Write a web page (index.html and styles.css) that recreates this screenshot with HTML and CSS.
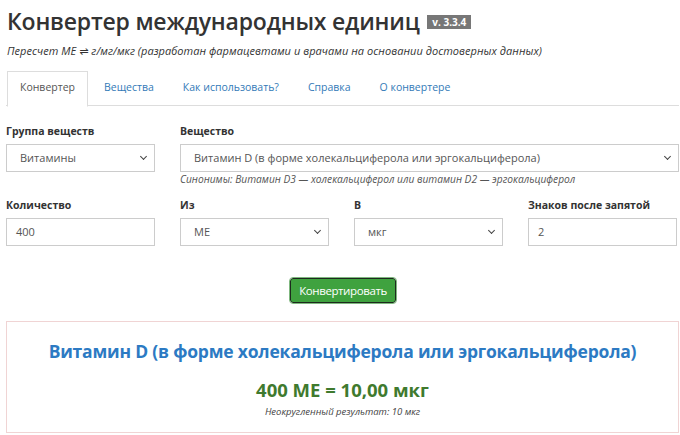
FILE: index.html
```html
<!DOCTYPE html>
<html lang="ru">
<head>
    <meta charset="UTF-8">
    <meta name="viewport" content="width=device-width, initial-scale=1.0">
    <title>Конвертер международных единиц</title>
    <link rel="stylesheet" href="styles.css">
</head>
<body>
    <div class="container">
        <h1 class="title">Конвертер международных единиц <span class="badge">v. 3.3.4</span></h1>
        <p class="lead">Пересчет МЕ &#8652; г/мг/мкг (разработан фармацевтами и врачами на основании достоверных данных)</p>

        <ul class="tabs">
            <li class="active"><a href="#">Конвертер</a></li>
            <li><a href="#">Вещества</a></li>
            <li><a href="#">Как использовать?</a></li>
            <li><a href="#">Справка</a></li>
            <li><a href="#">О конвертере</a></li>
        </ul>

        <form class="converter">
            <div class="row">
                <div class="field col-3">
                    <label>Группа веществ</label>
                    <div class="select">Витамины</div>
                </div>
                <div class="field col-9">
                    <label>Вещество</label>
                    <div class="select">Витамин D (в форме холекальциферола или эргокальциферола)</div>
                    <p class="hint">Синонимы: Витамин D3 — холекальциферол или витамин D2 — эргокальциферол</p>
                </div>
            </div>
            <div class="row">
                <div class="field col-3">
                    <label>Количество</label>
                    <div class="input">400</div>
                </div>
                <div class="field col-3">
                    <label>Из</label>
                    <div class="select">МЕ</div>
                </div>
                <div class="field col-3">
                    <label>В</label>
                    <div class="select">мкг</div>
                </div>
                <div class="field col-3">
                    <label>Знаков после запятой</label>
                    <div class="input">2</div>
                </div>
            </div>
            <div class="actions">
                <button type="button" class="btn">Конвертировать</button>
            </div>
        </form>

        <div class="result">
            <h2>Витамин D (в форме холекальциферола или эргокальциферола)</h2>
            <p class="value">400 МЕ = 10,00 мкг</p>
            <p class="raw">Неокругленный результат: 10 мкг</p>
        </div>
    </div>
</body>
</html>
```

FILE: styles.css
```css
* {
    margin: 0;
    padding: 0;
    box-sizing: border-box;
}
body {
    font-family: "Open Sans", "DejaVu Sans", sans-serif;
    color: #333;
    background: #fff;
}
.container {
    width: 673px;
    margin-left: 6px;
}
.title {
    font-size: 23px;
    font-weight: 600;
    line-height: 30px;
    padding-top: 6px;
    margin-left: 1px;
    letter-spacing: -0.2px;
}
.badge {
    display: inline-block;
    vertical-align: 4px;
    background: #777;
    color: #fff;
    font-size: 10px;
    font-weight: 700;
    line-height: 14px;
    padding: 0 5px;
    margin-left: 2px;
    letter-spacing: 0;
}
.lead {
    font-size: 11px;
    font-style: italic;
    margin-top: 7px;
    margin-left: 1px;
    color: #333;
    letter-spacing: 0.05px;
}
.tabs {
    list-style: none;
    display: flex;
    margin-top: 13px;
    border-bottom: 1px solid #ddd;
    height: 35px;
}
.tabs li a {
    display: block;
    height: 35px;
    padding: 8px 12px 0;
    font-size: 10.5px;
    color: #337ab7;
    text-decoration: none;
    border: 1px solid transparent;
    margin-right: 3px;
}
.tabs li:first-child a {
    margin-left: 1px;
}
.tabs li.active a {
    color: #555;
    border-color: #ddd;
    border-bottom-color: #fff;
    background: #fff;
    height: 36px;
}
.converter {
    margin-top: 18px;
}
.row {
    display: flex;
    gap: 25px;
    margin-bottom: 12px;
}
.col-3 {
    width: 149px;
}
.col-9 {
    flex: 1;
}
.field label {
    display: block;
    font-size: 10.5px;
    font-weight: 700;
    line-height: 14px;
    margin-bottom: 6px;
}
.select, .input {
    height: 28px;
    border: 1px solid #ccc;
    font-size: 11px;
    line-height: 26px;
    color: #555;
    padding-left: 9px;
}
.select {
    position: relative;
    padding-left: 13px;
}
.select::after {
    content: "";
    position: absolute;
    right: 8px;
    top: 9px;
    width: 4px;
    height: 4px;
    border-right: 1.5px solid #444;
    border-bottom: 1.5px solid #444;
    transform: rotate(45deg);
}
.hint {
    font-size: 10.2px;
    font-style: italic;
    color: #555;
    margin-top: 1px;
    line-height: 13px;
}
.actions {
    text-align: center;
    margin-top: 32px;
    margin-left: 1px;
}
.btn {
    font-family: "Open Sans", sans-serif;
    font-size: 11.5px;
    letter-spacing: -0.4px;
    color: #fff;
    background: #3fa23f;
    border: 1.5px solid #1d2a1d;
    border-radius: 3px;
    outline: 1px solid #7fb77f;
    outline-offset: 0;
    padding: 0 4px;
    height: 25px;
    width: 106px;
}
.result {
    margin-top: 18px;
    border: 1px solid #f0d4d4;
    height: 112px;
    text-align: center;
}
.result h2 {
    font-size: 17.5px;
    font-weight: 700;
    color: #2c7ac3;
    margin-top: 17px;
    letter-spacing: -0.2px;
}
.result .value {
    font-size: 18.5px;
    font-weight: 700;
    color: #3f7a2e;
    margin-top: 14px;
}
.result .raw {
    font-size: 9.5px;
    font-style: italic;
    color: #444;
    margin-top: 3px;
}
```
